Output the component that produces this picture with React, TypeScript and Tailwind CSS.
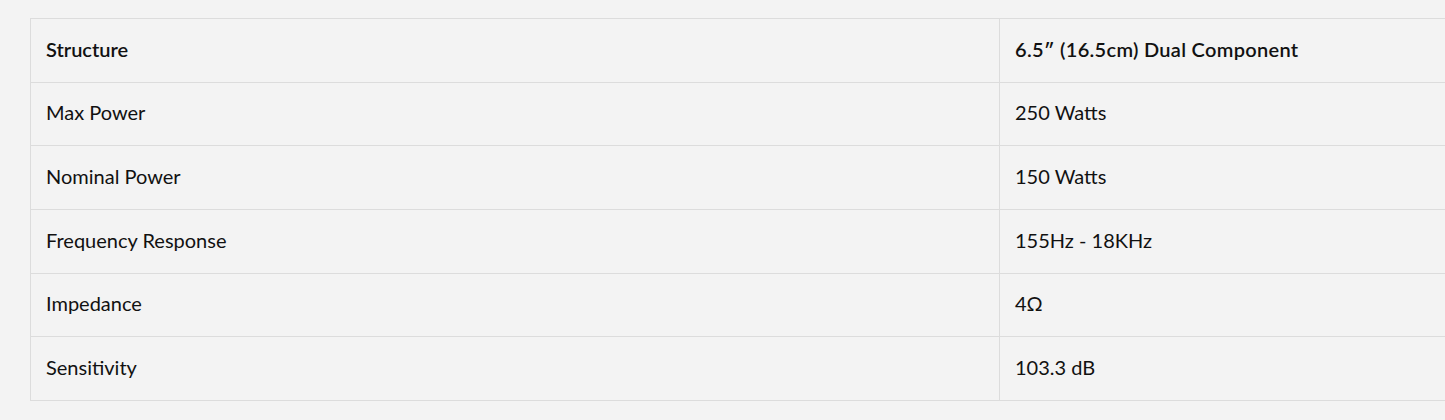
import React from 'react';

const SPECS: [string, string][] = [
  ['Max Power', '250 Watts'],
  ['Nominal Power', '150 Watts'],
  ['Frequency Response', '155Hz - 18KHz'],
  ['Impedance', '4Ω'],
  ['Sensitivity', '103.3 dB'],
];

export default function App() {
  return (
    <div className="min-h-[420px] w-full overflow-hidden bg-[#f3f3f3] pt-[18px] pl-[30px] text-[#111] font-['Lato','Noto_Sans',sans-serif]">
      <table className="w-[1460px] border-collapse text-[20px]">
        <tbody>
          <tr className="h-[63.67px]">
            <th className="w-[969px] border border-[#dcdcdc] px-[15px] pb-[3px] text-left font-semibold">Structure</th>
            <th className="border border-[#dcdcdc] px-[15px] pb-[3px] text-left font-semibold tracking-[0.3px]">6.5″ (16.5cm) Dual Component</th>
          </tr>
          {SPECS.map(([label, value]) => (
            <tr key={label} className="h-[63.67px]">
              <td className="border border-[#dcdcdc] px-[15px] pb-[3px]">{label}</td>
              <td className="border border-[#dcdcdc] px-[15px] pb-[3px]">{value}</td>
            </tr>
          ))}
        </tbody>
      </table>
    </div>
  );
}
